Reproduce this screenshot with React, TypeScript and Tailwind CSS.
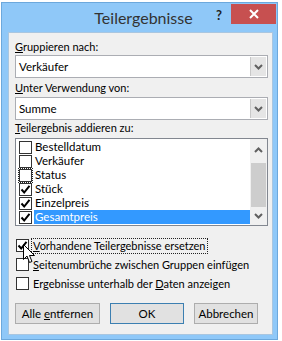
import React from 'react';

const font = { fontFamily: 'Lato, "Liberation Sans", Arial, sans-serif' };

const Chevron = ({ up = false }: { up?: boolean }) => (
  <svg width="9" height="6" viewBox="0 0 9 6" className={up ? 'rotate-180' : ''}>
    <path d="M1 1 L4.5 4.5 L8 1" fill="none" stroke="#606060" strokeWidth="2" />
  </svg>
);

const Check = () => (
  <svg width="11" height="11" viewBox="0 0 11 11">
    <path d="M1.5 5.5 L4.2 8.5 L9.5 1.8" fill="none" stroke="#000" strokeWidth="2" />
  </svg>
);

const Box = ({ checked = false, focus = false }: { checked?: boolean; focus?: boolean }) => (
  <div className={`p-px ${focus ? 'outline-1 outline-dotted outline-[#222] -outline-offset-1' : ''}`}>
    <div className="w-[13px] h-[13px] bg-white border border-[#333] flex items-center justify-center">
      {checked && <Check />}
    </div>
  </div>
);

const Select = ({ value }: { value: string }) => (
  <div className="ml-[6px] w-[253px] h-[23px] bg-white border border-[#abadb3] flex">
    <div className="flex-1 pl-[3px] text-[11.5px] leading-[21px] text-black">{value}</div>
    <div className="w-[16px] m-px bg-[#e5e5e5] border-l border-[#c8c8c8] flex items-center justify-center">
      <Chevron />
    </div>
  </div>
);

const fields = [
  { name: 'Bestelldatum', checked: false },
  { name: 'Verkäufer', checked: false },
  { name: 'Status', checked: false, focus: true },
  { name: 'Stück', checked: true },
  { name: 'Einzelpreis', checked: true },
  { name: 'Gesamtpreis', checked: true, selected: true },
];

const Btn = ({ children, w }: { children: React.ReactNode; w: string }) => (
  <button
    className={`${w} h-[21px] whitespace-nowrap text-[11.5px] leading-[19px] bg-[#e1e1e1] border ${
      w === 'w-[74px]' ? 'border-[#3c7fb1]' : 'border-[#adadad]'
    } text-black`}
  >
    {children}
  </button>
);

export default function App() {
  return (
    <div className="w-[282px] h-[341px] bg-white pt-[2px] pl-px relative whitespace-nowrap" style={font}>
      <div className="w-[277px] h-[338px] bg-[#8fc8f8] border border-[#6ca8dc] flex flex-col">
        {/* Title bar */}
        <div className="h-[29px] flex items-start">
          <div className="flex-1" />
          <div className="ml-[8px] text-[16px] leading-[22px] pt-[4px] text-[#333]">Teilergebnisse</div>
          <div className="flex-1 flex justify-end items-start">
            <div className="text-[13px] font-bold text-[#222] mt-[3px] mr-[9px]">?</div>
            <div className="w-[45px] h-[20px] mt-px mr-px bg-[#c75050] flex items-center justify-center">
              <svg width="10" height="10" viewBox="0 0 10 10">
                <path d="M1 1 L9 9 M9 1 L1 9" stroke="#fff" strokeWidth="2" />
              </svg>
            </div>
          </div>
        </div>

        {/* Body */}
        <div className="ml-[6px] mr-[4px] mb-[4px] flex-1 bg-[#f0f0f0] border border-[#a9c6e0] flex flex-col text-black text-[11px]">
          <div className="mt-[7px] ml-[6px] leading-[14px]">
            <u>G</u>ruppieren nach:
          </div>
          <div className="mt-px">
            <Select value="Verkäufer" />
          </div>

          <div className="mt-[3px] ml-[6px] leading-[14px]">
            <u>U</u>nter Verwendung von:
          </div>
          <div className="mt-[2px]">
            <Select value="Summe" />
          </div>

          <div className="mt-px ml-[6px] leading-[14px]">
            <u>T</u>eilergebnis addieren zu:
          </div>

          {/* List */}
          <div className="mt-[3px] ml-[6px] w-[253px] h-[88px] bg-white border border-[#828790] flex">
            <div className="flex-1 pt-px pl-[2px]">
              {fields.map((f) => (
                <div key={f.name} className="h-[14px] flex items-center">
                  <Box checked={f.checked} focus={f.focus} />
                  <div
                    className={`ml-px flex-1 h-[14px] pl-px text-[11.5px] leading-[14px] ${
                      f.selected ? 'bg-[#3399ff] text-white' : ''
                    }`}
                  >
                    {f.name}
                  </div>
                </div>
              ))}
            </div>
            <div className="w-[17px] bg-[#f0f0f0] flex flex-col items-center">
              <div className="h-[22px] flex items-center justify-center">
                <Chevron up />
              </div>
              <div className="w-[15px] h-[44px] mt-[2px] bg-[#cdcdcd]" />
              <div className="flex-1 flex items-center justify-center">
                <Chevron />
              </div>
            </div>
          </div>

          {/* Options */}
          <div className="mt-[10px] ml-[6px] flex flex-col">
            <div className="h-[19px] flex items-center">
              <Box checked />
              <div className="ml-[2px] px-px leading-[14px] outline-1 outline-dotted outline-[#222]">
                <u>V</u>orhandene Teilergebnisse ersetzen
              </div>
            </div>
            <div className="h-[19px] flex items-center">
              <Box />
              <div className="ml-[3px] leading-[14px]">
                <u>S</u>eitenumbrüche zwischen Gruppen einfügen
              </div>
            </div>
            <div className="h-[19px] flex items-center">
              <Box />
              <div className="ml-[3px] leading-[14px]">
                Ergebnisse unterhalb der <u>D</u>aten anzeigen
              </div>
            </div>
          </div>

          {/* Buttons */}
          <div className="mt-[10px] ml-[6px] flex gap-[10px]">
            <Btn w="w-[85px]">
              Alle <u>e</u>ntfernen
            </Btn>
            <Btn w="w-[74px]">OK</Btn>
            <Btn w="w-[64px]">Abbrechen</Btn>
          </div>
        </div>
      </div>

      {/* Mouse pointer */}
      <svg className="absolute left-[23px] top-[244px]" width="13" height="20" viewBox="0 0 13 20">
        <path
          d="M0.5 0.5 L0.5 15.5 L4 12 L6.5 18.5 L9 17.5 L6.5 11.5 L11.5 11.5 Z"
          fill="#fff"
          stroke="#000"
          strokeWidth="1"
        />
      </svg>
    </div>
  );
}
